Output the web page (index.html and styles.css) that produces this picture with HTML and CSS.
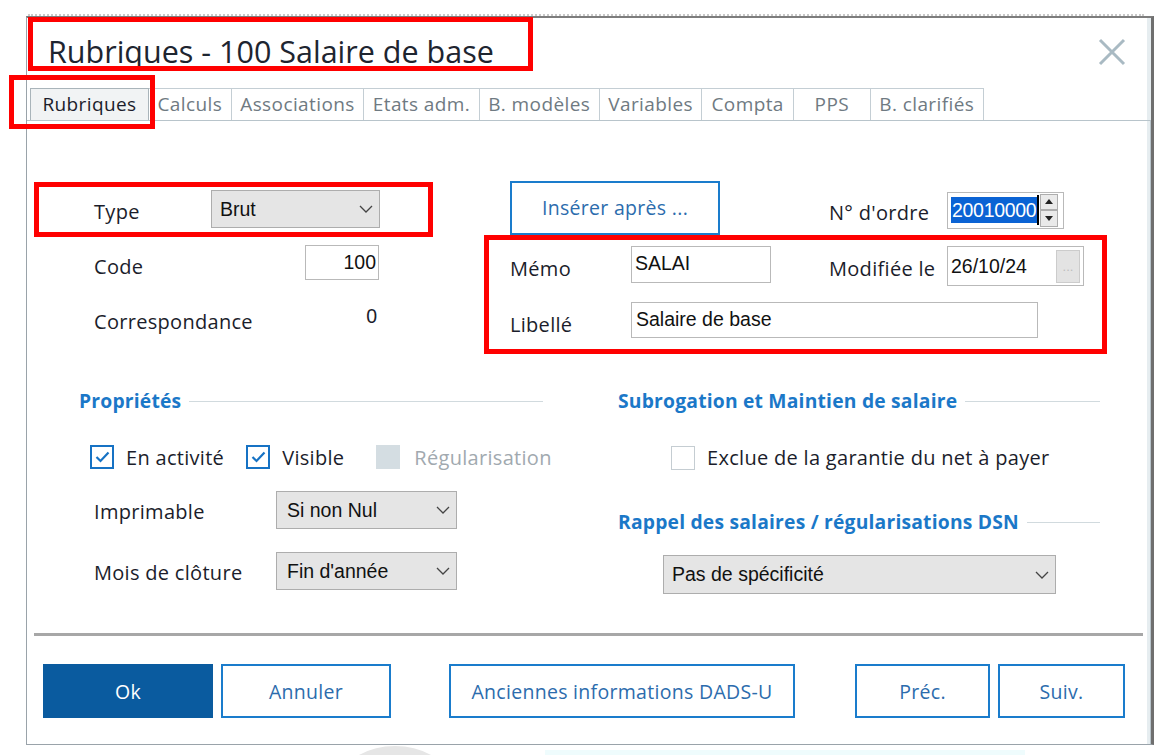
FILE: index.html
```html
<!DOCTYPE html>
<html lang="fr">
<head>
<meta charset="utf-8">
<title>Rubriques - 100 Salaire de base</title>
<link rel="stylesheet" href="styles.css">
</head>
<body>
<div class="page">
  <div class="backdrop"></div>
  <div class="dialog">
    <div class="header">
      <h1 class="title">Rubriques - 100 Salaire de base</h1>
      <svg class="close" width="28" height="28" viewBox="0 0 28 28"><path d="M2 2 L26 26 M26 2 L2 26" stroke="#a9bac3" stroke-width="3" fill="none"/></svg>
    </div>
    <div class="tabs">
      <div class="tab active">Rubriques</div>
      <div class="tab">Calculs</div>
      <div class="tab">Associations</div>
      <div class="tab">Etats adm.</div>
      <div class="tab">B. modèles</div>
      <div class="tab">Variables</div>
      <div class="tab compta">Compta</div>
      <div class="tab pps">PPS</div>
      <div class="tab">B. clarifiés</div>
    </div>
    <div class="panel">
      <div class="top">
        <div class="left-grid">
          <span class="lbl">Type</span>
          <div class="select sel-type"><span>Brut</span><svg class="chev" width="14" height="8" viewBox="0 0 14 8"><path d="M1 1 L7 7 L13 1" stroke="#444" stroke-width="1.3" fill="none"/></svg></div>
          <span class="lbl">Code</span>
          <div class="code-cell"><div class="input in-code">100</div></div>
          <span class="lbl">Correspondance</span>
          <div class="code-cell"><span class="val">0</span></div>
        </div>
        <div class="right-grid">
          <button class="btn ins">Insérer après ...</button>
          <span class="lbl lbl-r">N° d'ordre</span>
          <div class="spin">
            <span class="sel-text">20010000</span><span class="caret"></span>
            <div class="spin-btns">
              <div class="sb"><svg width="8" height="5" viewBox="0 0 8 5"><path d="M0 5 L4 0 L8 5Z" fill="#222"/></svg></div>
              <div class="sb"><svg width="8" height="5" viewBox="0 0 8 5"><path d="M0 0 L4 5 L8 0Z" fill="#222"/></svg></div>
            </div>
          </div>
          <span class="lbl">Mémo</span>
          <div class="input in-memo">SALAI</div>
          <span class="lbl lbl-r">Modifiée le</span>
          <div class="input in-date"><span>26/10/24</span><span class="dots">...</span></div>
          <span class="lbl">Libellé</span>
          <div class="input in-lib">Salaire de base</div>
        </div>
      </div>
      <div class="sections">
        <div class="sec sec-left">
          <div class="sec-head"><span>Propriétés</span><i></i></div>
          <div class="checks">
            <label class="chk"><span class="box on"><svg width="15" height="12" viewBox="0 0 15 12"><path d="M1.5 6 L5.5 10 L13.5 1.5" stroke="#1672c4" stroke-width="2.2" fill="none"/></svg></span>En activité</label>
            <label class="chk"><span class="box on"><svg width="15" height="12" viewBox="0 0 15 12"><path d="M1.5 6 L5.5 10 L13.5 1.5" stroke="#1672c4" stroke-width="2.2" fill="none"/></svg></span>Visible</label>
            <label class="chk dis"><span class="box off"></span>Régularisation</label>
          </div>
          <div class="prop-row">
            <span class="lbl">Imprimable</span>
            <div class="select sel-prop"><span>Si non Nul</span><svg class="chev" width="14" height="8" viewBox="0 0 14 8"><path d="M1 1 L7 7 L13 1" stroke="#444" stroke-width="1.3" fill="none"/></svg></div>
          </div>
          <div class="prop-row">
            <span class="lbl">Mois de clôture</span>
            <div class="select sel-prop"><span>Fin d'année</span><svg class="chev" width="14" height="8" viewBox="0 0 14 8"><path d="M1 1 L7 7 L13 1" stroke="#444" stroke-width="1.3" fill="none"/></svg></div>
          </div>
        </div>
        <div class="sec sec-right">
          <div class="sec-head"><span>Subrogation et Maintien de salaire</span><i></i></div>
          <label class="chk excl"><span class="box empty"></span>Exclue de la garantie du net à payer</label>
          <div class="sec-head rappel"><span>Rappel des salaires / régularisations DSN</span><i></i></div>
          <div class="select sel-dsn"><span>Pas de spécificité</span><svg class="chev" width="14" height="8" viewBox="0 0 14 8"><path d="M1 1 L7 7 L13 1" stroke="#444" stroke-width="1.3" fill="none"/></svg></div>
        </div>
      </div>
      <div class="sep"></div>
      <div class="actions">
        <button class="btn ok">Ok</button>
        <button class="btn annuler">Annuler</button>
        <button class="btn dads">Anciennes informations DADS-U</button>
        <span class="spacer"></span>
        <button class="btn nav">Préc.</button>
        <button class="btn nav suiv">Suiv.</button>
      </div>
    </div>
  </div>
  <div class="wm wm-ring"></div>
  <div class="wm wm-band"></div>
  <div class="mark m1"></div>
  <div class="mark m2"></div>
  <div class="mark m3"></div>
  <div class="mark m4"></div>
</div>
</body>
</html>
```
FILE: styles.css
```css
* { box-sizing: border-box; }
html, body { margin: 0; padding: 0; background: #fff; }
body { font-family: "Open Sans", "Noto Sans", sans-serif; color: #1b1d2b; }
.page { position: relative; width: 1172px; height: 755px; overflow: hidden; }
.backdrop { height: 16px; border-bottom: 2px dotted #c9c9c9; margin: 0 28px 0 28px; }
.dialog {
  margin-left: 26px; width: 1128px; height: 729px;
  border: 1px solid #9aa3aa; border-top: 2px solid #7d7d7d; border-right: 3px solid #6f6f6f;
  box-shadow: inset -4px 0 0 #e6edf0;
  display: flex; flex-direction: column; background: #fff;
}
.header { height: 70px; display: flex; align-items: center; justify-content: space-between; padding: 0 25px 0 21px; }
.title { margin: 0; font-weight: 400; font-size: 30.5px; letter-spacing: 0; color: #1e2530; margin-top: -4px; }
.close { margin-top: -2px; }
.tabs { display: flex; height: 32px; padding-left: 3px; align-items: flex-end; }
.tab {
  height: 32px; padding: 0 8.5px; border: 1px solid #c4ced4; border-bottom: none; border-left: none;
  font-size: 19px; letter-spacing: 0.4px; color: #6f7a82; line-height: 30px; text-align: center; white-space: nowrap;
}
.tab:first-child { border-left: 1px solid #c4ced4; }
.tab.active { background: #f1f3f4; color: #1b1d2b; width: 119px; border: 1px solid #a9b4ba; border-bottom: none; padding: 0; }
.tab.compta { padding: 0 9px; }
.tab.pps { min-width: 77px; }
.panel { flex: 1; border-top: 1px solid #b8c4cb; border-right: 1px solid #b8c4cb; display: flex; flex-direction: column; }
.lbl { font-size: 20px; letter-spacing: 0.3px; white-space: nowrap; }
.top { display: flex; padding-top: 64px; height: 261px; }
.left-grid {
  display: grid; grid-template-columns: 117px 169px; grid-template-rows: 52px 56px 56px;
  align-items: center; margin-left: 67px; width: 396px;
}
.left-grid .lbl:nth-of-type(2) { margin-top: 2px; }
.select {
  display: flex; align-items: center; justify-content: space-between;
  background: #e5e5e5; border: 1px solid #adadad; font-family: "Liberation Sans", Arial, sans-serif;
  font-size: 19.5px; color: #111; padding: 0 6px 0 8px;
}
.sel-type { height: 38px; margin-top: -4px; }
.code-cell { display: flex; justify-content: flex-end; padding-right: 1px; }
.input {
  border: 1px solid #b9b9b9; background: #fff; font-family: "Liberation Sans", Arial, sans-serif;
  font-size: 19.5px; color: #111; display: flex; align-items: center;
}
.in-code { width: 74px; height: 35px; justify-content: flex-end; padding-right: 2px; margin-top: -6px; }
.val { font-family: "Liberation Sans", Arial, sans-serif; font-size: 19.5px; padding-right: 2px; margin-top: -10px; }
.right-grid {
  display: grid; grid-template-columns: 121px 198px 118px 136px; grid-template-rows: 55px 56px 56px;
  align-items: center; margin-left: 20px;
}
.right-grid .lbl { margin-top: 0; }
.btn {
  font-family: "Open Sans", "Noto Sans", sans-serif; font-size: 19.5px; letter-spacing: 0.3px; color: #2c6cad; background: #fff;
  border: 2px solid #1a7ccc; padding: 0; cursor: default;
}
.ins { grid-column: 1 / 3; width: 210px; height: 54px; margin-top: -10px; }
.spin { position: relative; width: 117px; height: 37px; border: 1px solid #b9b9b9; display: flex; align-items: center; padding-left: 3px; margin-top: -5px; }
.sel-text { background: #0b63d4; color: #fff; font-family: "Liberation Sans", Arial, sans-serif; font-size: 19.5px; line-height: 26px; padding: 0 1px; letter-spacing: -0.3px; }
.caret { width: 2px; height: 30px; background: #000; }
.spin-btns { display: flex; flex-direction: column; margin-left: 1px; height: 33px; }
.sb { width: 18px; height: 16.5px; background: #eaeaea; border: 1px solid #adadad; display: flex; align-items: center; justify-content: center; }
.in-memo { width: 140px; height: 37px; padding-left: 3px; align-items: flex-start; padding-top: 5px; margin-top: -8px; }
.in-date { width: 137px; height: 40px; padding-left: 3px; justify-content: space-between; padding-right: 3px; margin-top: -4px; }
.dots { width: 24px; height: 33px; background: #e3e3e3; border: 1px solid #cccccc; color: #bdbdbd; font-size: 13px; display: flex; align-items: center; justify-content: center; }
.in-lib { grid-column: 2 / 5; width: 407px; height: 36px; padding-left: 4px; margin-top: -9px; }
.sections { display: flex; padding-top: 5px; height: 251px; }
.sec-head { display: flex; align-items: center; color: #1b78c8; font-weight: 700; font-size: 19.3px; letter-spacing: 0.2px; }
.sec-head i { flex: 1; height: 1px; background: #d1dade; margin-left: 8px; margin-top: 2px; }
.sec-left { margin-left: 52px; width: 464px; }
.checks { display: flex; align-items: center; margin-top: 30px; margin-left: 11px; height: 26px; }
.chk { display: flex; align-items: center; font-size: 20px; letter-spacing: 0.3px; white-space: nowrap; }
.chk .box { width: 24px; height: 24px; margin-right: 12px; display: flex; align-items: center; justify-content: center; }
.box.on { border: 2px solid #1672c4; }
.box.off { background: #d4dde2; margin-right: 14px; }
.box.empty { border: 1px solid #c5cdd2; }
.checks .chk:nth-child(1) { margin-right: 22px; }
.checks .chk:nth-child(2) { margin-right: 32px; }
.chk.dis { color: #a1a9af; }
.prop-row { display: grid; grid-template-columns: 182px 181px; align-items: center; margin-left: 15px; height: 38px; }
.checks + .prop-row { margin-top: 21px; }
.prop-row + .prop-row { margin-top: 23px; }
.prop-row .lbl { margin-top: 3px; }
.sel-prop { height: 38px; padding-left: 10px; }
.sec-right { margin-left: 75px; width: 482px; }
.excl { margin-left: 53px; margin-top: 30px; }
.rappel { margin-top: 37px; }
.sel-dsn { width: 393px; height: 39px; margin-left: 45px; margin-top: 20px; }
.sep { height: 3px; background: #a7a7a7; margin: 0 7px 0 7px; }
.actions { display: flex; padding: 28px 25px 0 16px; gap: 8px; }
.actions .btn { height: 54px; }
.ok { width: 170px; background: #0a5b9f; border-color: #0a5b9f; color: #fff; }
.annuler { width: 170px; }
.dads { width: 346px; margin-left: 50px; }
.spacer { flex: 1; }
.nav { width: 135px; }
.suiv { width: 127px; }
.wm { position: absolute; }
.wm-ring { left: 320px; top: 746px; width: 150px; height: 150px; border-radius: 50%; border: 14px solid #e6e6e6; }
.wm-band { left: 545px; top: 750px; width: 480px; height: 5px; background: #effcfd; }
.mark { position: absolute; border: 5px solid #ff0000; }
.m1 { left: 28px; top: 17px; width: 505px; height: 54px; }
.m2 { left: 9px; top: 75px; width: 146px; height: 54px; }
.m3 { left: 34px; top: 182px; width: 399px; height: 55px; }
.m4 { left: 484px; top: 235px; width: 623px; height: 119px; }
```
